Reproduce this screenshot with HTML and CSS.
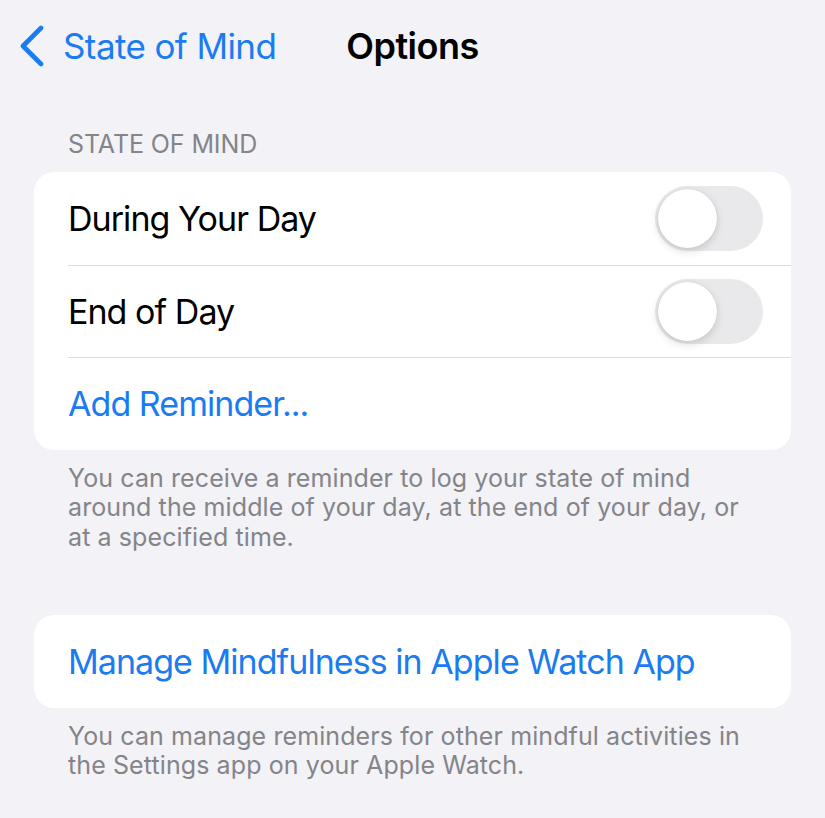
FILE: index.html
```html
<!DOCTYPE html>
<html lang="en">

<head>
    <meta charset="utf-8">
    <meta name="viewport" content="width=device-width, initial-scale=1.0">
    <title>Options</title>
    <link rel="stylesheet" href="styles.css">
</head>

<body>
    <!--NAV BAR MED TILBAGE-KNAP-->
    <nav class="navbar">
        <a class="back" href="#">
            <svg class="chevron" width="26" height="42" viewBox="0 0 26 42">
                <path d="M22 3 L4 21 L22 39" fill="none" stroke="currentColor" stroke-width="4.6"
                    stroke-linecap="round" stroke-linejoin="round" />
            </svg>
            <span>State of Mind</span>
        </a>
        <h1>Options</h1>
        <div></div>
    </nav>

    <main>
        <section class="group">
            <h2 class="group-header">STATE OF MIND</h2>
            <div class="card">
                <div class="row">
                    <span class="label">During Your Day</span>
                    <label class="switch">
                        <input type="checkbox">
                        <span class="knob"></span>
                    </label>
                </div>
                <div class="row">
                    <span class="label">End of Day</span>
                    <label class="switch">
                        <input type="checkbox">
                        <span class="knob"></span>
                    </label>
                </div>
                <div class="row">
                    <a class="link" href="#">Add Reminder...</a>
                </div>
            </div>
            <p class="group-footer">You can receive a reminder to log your state of mind around the middle of your day, at the end of your day, or at a specified time.</p>
        </section>

        <section class="group spaced">
            <div class="card">
                <div class="row">
                    <a class="link" href="#">Manage Mindfulness in Apple Watch App</a>
                </div>
            </div>
            <p class="group-footer">You can manage reminders for other mindful activities in the Settings app on your Apple Watch.</p>
        </section>
    </main>
</body>

</html>
```

FILE: styles.css
```css
/*GENERELT*/
* {
    margin: 0;
    padding: 0;
    box-sizing: border-box;
}

body {
    background: #f2f2f7;
    font-family: 'Inter', 'Liberation Sans', sans-serif;
    color: #000;
    width: 825px;
    height: 818px;
    overflow: hidden;
}

a {
    text-decoration: none;
    color: #1a7cf0;
}

/*NAV BAR*/
.navbar {
    display: grid;
    grid-template-columns: 1fr auto 1fr;
    align-items: center;
    height: 92px;
    padding: 0 19px;
}

.back {
    display: flex;
    align-items: center;
    gap: 18px;
    font-size: 35px;
    letter-spacing: -0.6px;
}

.chevron {
    display: block;
}

.navbar h1 {
    font-size: 36px;
    font-weight: 600;
    letter-spacing: -0.5px;
}

/*GRUPPER*/
main {
    padding: 0 34px;
}

.group-header {
    font-size: 25px;
    font-weight: 400;
    color: #848489;
    padding: 35px 34px 11px;
    line-height: 34px;
    letter-spacing: -0.1px;
}

.card {
    background: #fff;
    border-radius: 20px;
    overflow: hidden;
}

.row {
    display: flex;
    align-items: center;
    justify-content: space-between;
    height: 92.6px;
    margin-left: 34px;
    padding-right: 28px;
    font-size: 34px;
    letter-spacing: -0.95px;
}

.row + .row {
    border-top: 1px solid #dcdce0;
}

.group-footer {
    font-size: 25px;
    line-height: 29.5px;
    color: #848489;
    padding: 14px 34px 0;
    letter-spacing: 0.1px;
}

.spaced {
    margin-top: 63px;
}

/*TOGGLE*/
.switch {
    position: relative;
    width: 108px;
    height: 65px;
}

.switch input {
    display: none;
}

.knob {
    display: block;
    width: 100%;
    height: 100%;
    border-radius: 33px;
    background: #e9e9eb;
}

.knob::before {
    content: "";
    position: absolute;
    left: 3px;
    top: 3px;
    width: 59px;
    height: 59px;
    border-radius: 50%;
    background: #fff;
    box-shadow: 0 3px 8px rgba(0, 0, 0, 0.15), 0 0 1px rgba(0, 0, 0, 0.16);
}
```
